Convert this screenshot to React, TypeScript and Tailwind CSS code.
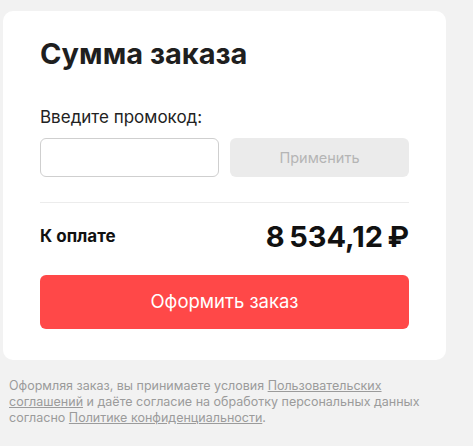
import React from "react";

export default function App() {
  return (
    <div
      className="min-h-[446px] w-[473px] bg-[#f2f2f2] pt-[11px]"
      style={{ fontFamily: "Inter, 'Noto Sans', sans-serif" }}
    >
      <div className="ml-[3px] w-[443px] rounded-[10px] bg-white px-[37px] pt-[23px] pb-[31px]">
        <h1 className="text-[29px] font-bold leading-[40px] text-[#1f1f1f]">Сумма заказа</h1>
        <div className="mt-[33px] text-[17px] leading-[20px] text-[#222]">Введите промокод:</div>
        <div className="mt-[11px] flex gap-[11px]">
          <input className="h-[39px] w-[179px] rounded-[6px] border border-[#cfcfcf] bg-white px-3 outline-none" />
          <button className="h-[39px] flex-1 rounded-[6px] bg-[#ebebeb] text-[14.5px] text-[#b5b5b5]">Применить</button>
        </div>
        <div className="mt-[25px] h-px bg-[#ececec]" />
        <div className="mt-[16px] flex items-center justify-between">
          <span className="text-[17px] font-bold text-[#111]">К оплате</span>
          <span className="text-[29px] font-bold leading-[36px] tracking-[-0.3px] text-[#111]">8&#8239;534,12&#8239;₽</span>
        </div>
        <button className="mt-[20px] h-[54px] w-full rounded-[6px] bg-[#ff4848] text-[18.5px] text-white">Оформить заказ</button>
      </div>
      <p className="mt-[18px] ml-[9px] w-[430px] text-[12.5px] leading-[16px] text-[#9b9b9b]">
        Оформляя заказ, вы принимаете условия <span className="underline">Пользовательских соглашений</span> и даёте согласие на обработку персональных данных согласно <span className="underline">Политике конфиденциальности</span>.
      </p>
    </div>
  );
}
